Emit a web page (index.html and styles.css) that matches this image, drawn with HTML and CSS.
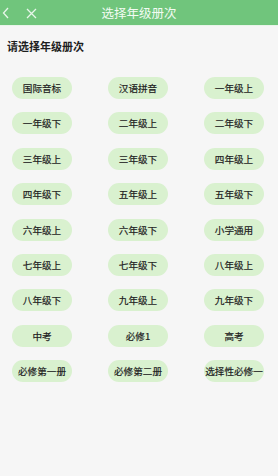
FILE: index.html
```html
<html lang="zh">

<head>
    <meta charset="UTF-8">
    <meta name="viewport" content="width=device-width, initial-scale=1.0">
    <title>选择年级册次</title>
    <link rel="stylesheet" href="styles.css">
</head>

<body>

    <div class="topbar">
        <div class="nav-icons">
            <svg width="8" height="12" viewBox="0 0 8 12">
                <path d="M6 1 L1.5 6 L6 11" fill="none" stroke="#e8f6ea" stroke-width="1.3" />
            </svg>
            <svg width="11" height="11" viewBox="0 0 11 11">
                <path d="M1 1 L10 10 M10 1 L1 10" fill="none" stroke="#e8f6ea" stroke-width="1.3" />
            </svg>
        </div>
        <p class="topbar-title">选择年级册次</p>
    </div>

    <p class="section-title">请选择年级册次</p>

    <div class="grades">
        <a href="#" class="pill">国际音标</a>
        <a href="#" class="pill">汉语拼音</a>
        <a href="#" class="pill">一年级上</a>
        <a href="#" class="pill">一年级下</a>
        <a href="#" class="pill">二年级上</a>
        <a href="#" class="pill">二年级下</a>
        <a href="#" class="pill">三年级上</a>
        <a href="#" class="pill">三年级下</a>
        <a href="#" class="pill">四年级上</a>
        <a href="#" class="pill">四年级下</a>
        <a href="#" class="pill">五年级上</a>
        <a href="#" class="pill">五年级下</a>
        <a href="#" class="pill">六年级上</a>
        <a href="#" class="pill">六年级下</a>
        <a href="#" class="pill">小学通用</a>
        <a href="#" class="pill">七年级上</a>
        <a href="#" class="pill">七年级下</a>
        <a href="#" class="pill">八年级上</a>
        <a href="#" class="pill">八年级下</a>
        <a href="#" class="pill">九年级上</a>
        <a href="#" class="pill">九年级下</a>
        <a href="#" class="pill">中考</a>
        <a href="#" class="pill">必修1</a>
        <a href="#" class="pill">高考</a>
        <a href="#" class="pill">必修第一册</a>
        <a href="#" class="pill">必修第二册</a>
        <a href="#" class="pill">选择性必修一</a>
    </div>

</body>

</html>
```

FILE: styles.css
```css
body {
    margin: 0;
    background-color: #f6f6f6;
    font-family: "Noto Sans CJK SC", "Noto Sans", sans-serif;
    height: 476px;
}

.topbar {
    position: relative;
    height: 25px;
    background-color: #70c57c;
    border-bottom: 1px solid #e9f5ea;
    display: flex;
    align-items: center;
    justify-content: center;
}
.nav-icons {
    position: absolute;
    left: 2px;
    top: 7px;
    display: flex;
    gap: 16px;
    align-items: center;
}
.topbar-title {
    margin: 0;
    color: #f2fbf3;
    font-size: 12.5px;
    line-height: 25px;
}

.section-title {
    margin: 13px 0 0 7px;
    font-size: 11px;
    font-weight: bold;
    color: #1e1e1e;
    line-height: 14px;
}

.grades {
    display: grid;
    grid-template-columns: repeat(3, 60px);
    justify-content: space-between;
    row-gap: 13.4px;
    padding: 24px 14px 0 12px;
}

.pill {
    height: 22px;
    border-radius: 11px;
    background-color: #d9f1cf;
    color: #222;
    font-size: 9.6px;
    line-height: 22px;
    text-align: center;
    text-decoration: none;
    white-space: nowrap;
    -webkit-text-stroke: 0.2px #222;
}
```
